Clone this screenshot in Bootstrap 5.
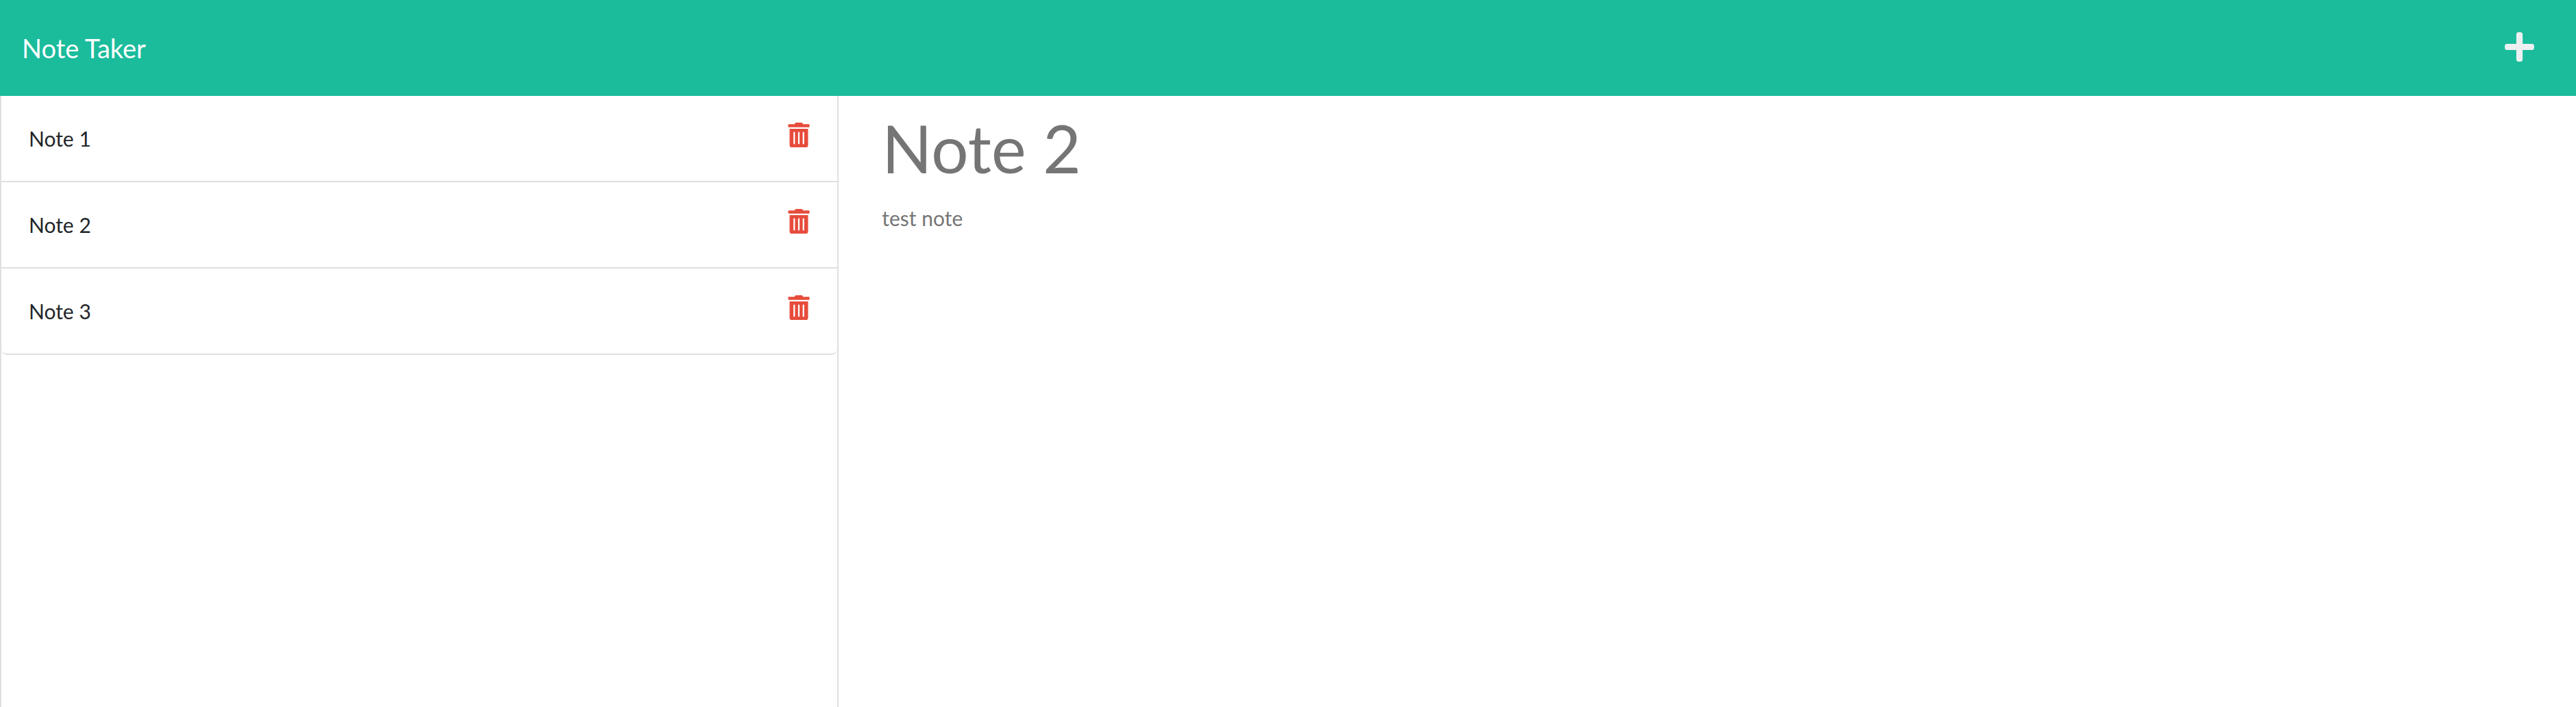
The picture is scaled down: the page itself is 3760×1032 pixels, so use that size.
<!DOCTYPE html>
<html lang="en">
<head>
<meta charset="utf-8">
<meta name="viewport" content="width=device-width, initial-scale=1">
<title>Note Taker</title>
<link href="https://cdn.jsdelivr.net/npm/bootstrap@5.3.0/dist/css/bootstrap.min.css" rel="stylesheet">
<style>
  body { font-family: Lato, "Liberation Sans", sans-serif; font-size: 30px; line-height: 45px; color: #212529; text-rendering: optimizeLegibility; }
  .topbar { background: #1abc9c; min-height: 140px; padding: 0 32px; }
  .topbar .navbar-brand { font-size: 38px; line-height: 56px; color: #fff; }
  .new-note { color: #ecf0f1; margin-right: 29px; line-height: 0; }
  .new-note svg { width: 43px; height: 49px; margin-bottom: 4px; }
  .notes-col { padding: 0 29px 0 0; }
  .notes-pane { border: solid #dfdfdf; border-width: 0 2px; }
  .notes-pane .list-group { --bs-list-group-border-radius: 8px; border-radius: 0 0 8px 8px; border-bottom: 2px solid #dfdfdf; }
  .note-row { height: 124px; padding: 0 40px; border: 0; color: #212529; }
  .note-row + .note-row { border-top: 2px solid #dfdfdf; height: 126px; }
  .note-link { color: inherit; text-decoration: none; }
  .trash-btn { color: #e74c3c; line-height: 0; margin-bottom: 10px; }
  .trash-btn svg { width: 32px; height: 36px; }
  .editor-col { padding: 18px 30px 0 30px; }
  .note-title, .note-text { display: block; width: 100%; border: 0; padding: 0 4px; background: transparent; color: #757575; outline: 0; resize: none; text-rendering: optimizeLegibility; }
  .note-title { font-size: 96px; line-height: 116px; height: 116px; margin-bottom: 22px; }
  .note-text { line-height: 45px; }
</style>
</head>
<body>
<div class="d-flex flex-column vh-100 overflow-hidden">
  <nav class="navbar topbar d-flex justify-content-between align-items-center">
    <a class="navbar-brand p-0 m-0" href="#">Note Taker</a>
    <button class="btn p-0 border-0 new-note" type="button" aria-label="New note">
      <svg viewBox="0 0 448 512" fill="currentColor" aria-hidden="true"><path d="M416 208H272V64c0-17.67-14.33-32-32-32h-32c-17.67 0-32 14.33-32 32v144H32c-17.67 0-32 14.33-32 32v32c0 17.67 14.33 32 32 32h144v144c0 17.67 14.33 32 32 32h32c17.67 0 32-14.33 32-32V304h144c17.67 0 32-14.33 32-32v-32c0-17.67-14.33-32-32-32z"/></svg>
    </button>
  </nav>
  <main class="row g-0 flex-grow-1">
    <div class="col-4 notes-col">
      <div class="notes-pane h-100">
        <ul class="list-group list-group-flush">
          <li class="list-group-item note-row d-flex justify-content-between align-items-center">
            <a class="note-link" href="#">Note 1</a>
            <button class="btn p-0 border-0 trash-btn" type="button" aria-label="Delete Note 1"><svg viewBox="0 0 448 512" fill="currentColor" aria-hidden="true"><use href="#trash"/></svg></button>
          </li>
          <li class="list-group-item note-row d-flex justify-content-between align-items-center">
            <a class="note-link" href="#">Note 2</a>
            <button class="btn p-0 border-0 trash-btn" type="button" aria-label="Delete Note 2"><svg viewBox="0 0 448 512" fill="currentColor" aria-hidden="true"><use href="#trash"/></svg></button>
          </li>
          <li class="list-group-item note-row d-flex justify-content-between align-items-center">
            <a class="note-link" href="#">Note 3</a>
            <button class="btn p-0 border-0 trash-btn" type="button" aria-label="Delete Note 3"><svg viewBox="0 0 448 512" fill="currentColor" aria-hidden="true"><use href="#trash"/></svg></button>
          </li>
        </ul>
      </div>
    </div>
    <div class="col-8 editor-col">
      <input class="note-title" type="text" value="Note 2" aria-label="Note title" readonly>
      <textarea class="note-text" rows="8" aria-label="Note text" readonly>test note</textarea>
    </div>
  </main>
</div>
<svg width="0" height="0" class="d-none" aria-hidden="true">
  <symbol id="trash" viewBox="0 0 448 512"><path d="M32 464a48 48 0 0 0 48 48h288a48 48 0 0 0 48-48V128H32zm272-256a16 16 0 0 1 32 0v224a16 16 0 0 1-32 0zm-96 0a16 16 0 0 1 32 0v224a16 16 0 0 1-32 0zm-96 0a16 16 0 0 1 32 0v224a16 16 0 0 1-32 0zM432 32H312l-9.400-18.700A24 24 0 0 0 281.100 0H166.800a23.720 23.720 0 0 0-21.400 13.300L136 32H16A16 16 0 0 0 0 48v32a16 16 0 0 0 16 16h416a16 16 0 0 0 16-16V48a16 16 0 0 0-16-16z"/></symbol>
</svg>
<script src="https://cdn.jsdelivr.net/npm/bootstrap@5.3.0/dist/js/bootstrap.bundle.min.js"></script>
</body>
</html>
